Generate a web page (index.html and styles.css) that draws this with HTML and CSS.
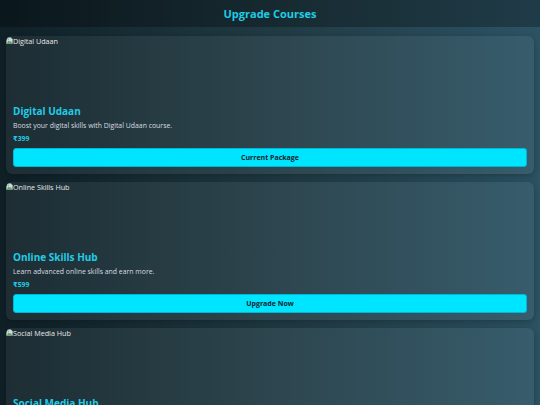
FILE: index.html
```html
<!DOCTYPE html>
<html lang="en">
<head>
<meta charset="utf-8">
<title>Upgrade Courses</title>
<link rel="stylesheet" href="styles.css">
</head>
<body>
<header class="topbar"><h1 class="title">Upgrade Courses</h1></header>
<main class="list">
  <section class="card">
    <div class="thumb"><svg class="broken" viewBox="0 0 8 8" width="7" height="7"><path d="M0.5 0.5h5l2 2v5h-7z" fill="#d8d8d8" stroke="#9a9a9a" stroke-width="0.6"/><path d="M1 7l2-3 1.5 1.5 1-1 1.5 2.5z" fill="#4caf50"/><circle cx="2.5" cy="2.5" r="0.8" fill="#5aa0e0"/></svg><span>Digital Udaan</span></div>
    <div class="body">
      <h2 class="name">Digital Udaan</h2>
      <p class="desc">Boost your digital skills with Digital Udaan course.</p>
      <p class="price">₹399</p>
      <button class="btn">Current Package</button>
    </div>
  </section>
  <section class="card">
    <div class="thumb"><svg class="broken" viewBox="0 0 8 8" width="7" height="7"><path d="M0.5 0.5h5l2 2v5h-7z" fill="#d8d8d8" stroke="#9a9a9a" stroke-width="0.6"/><path d="M1 7l2-3 1.5 1.5 1-1 1.5 2.5z" fill="#4caf50"/><circle cx="2.5" cy="2.5" r="0.8" fill="#5aa0e0"/></svg><span>Online Skills Hub</span></div>
    <div class="body">
      <h2 class="name">Online Skills Hub</h2>
      <p class="desc">Learn advanced online skills and earn more.</p>
      <p class="price">₹599</p>
      <button class="btn">Upgrade Now</button>
    </div>
  </section>
  <section class="card">
    <div class="thumb"><svg class="broken" viewBox="0 0 8 8" width="7" height="7"><path d="M0.5 0.5h5l2 2v5h-7z" fill="#d8d8d8" stroke="#9a9a9a" stroke-width="0.6"/><path d="M1 7l2-3 1.5 1.5 1-1 1.5 2.5z" fill="#4caf50"/><circle cx="2.5" cy="2.5" r="0.8" fill="#5aa0e0"/></svg><span>Social Media Hub</span></div>
    <div class="body">
      <h2 class="name">Social Media Hub</h2>
      <p class="desc">Grow your brand with social media skills.</p>
      <p class="price">₹799</p>
      <button class="btn">Upgrade Now</button>
    </div>
  </section>
</main>
</body>
</html>
```
FILE: styles.css
```css
* { box-sizing: border-box; }
html, body { margin: 0; height: 100%; }
body {
  background: linear-gradient(to right, #0f2027, #203a43, #2c5364);
  font-family: "Open Sans", "DejaVu Sans", sans-serif;
  color: #fff;
  overflow: hidden;
}
.topbar {
  height: 27px;
  display: flex;
  align-items: center;
  justify-content: center;
  background: rgba(0, 0, 0, 0.28);
}
.title {
  margin: 0;
  font-size: 11px;
  font-weight: 700;
  color: #1fcde6;
}
.list {
  display: flex;
  flex-direction: column;
  gap: 8px;
  padding: 9px 6px;
}
.card {
  background: rgba(255, 255, 255, 0.06);
  border-radius: 6px;
  box-shadow: 0 2px 6px rgba(0, 0, 0, 0.25);
  overflow: hidden;
}
.thumb {
  height: 60px;
  display: flex;
  align-items: flex-start;
  padding-top: 1px;
  font-size: 7.2px;
  line-height: 8px;
  color: #e8e8e8;
}
.broken { flex: none; }
.body {
  padding: 9px 7px 7px;
}
.name {
  margin: 0;
  font-size: 10px;
  line-height: 12px;
  font-weight: 700;
  color: #1fcde6;
}
.desc {
  margin: 4px 0 0;
  font-size: 6.9px;
  line-height: 9px;
  color: #d8dde0;
}
.price {
  margin: 4px 0 0;
  font-size: 6.8px;
  line-height: 9px;
  font-weight: 700;
  color: #1fcde6;
}
.btn {
  display: block;
  width: 100%;
  height: 19px;
  margin-top: 5px;
  border: 1px solid #00b8d4;
  border-radius: 3px;
  background: #00e5ff;
  color: #10232c;
  font-family: inherit;
  font-size: 7px;
  font-weight: 700;
}
```
